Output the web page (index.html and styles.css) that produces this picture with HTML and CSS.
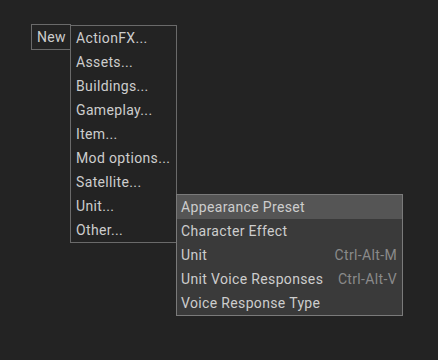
FILE: index.html
```html
<!DOCTYPE html>
<html>
<head>
<meta charset="utf-8">
<link rel="stylesheet" href="styles.css">
</head>
<body>
<div class="bar">
  <div class="new">New
    <div class="menu">
      <div class="item">ActionFX...</div>
      <div class="item">Assets...</div>
      <div class="item">Buildings...</div>
      <div class="item">Gameplay...</div>
      <div class="item">Item...</div>
      <div class="item">Mod options...</div>
      <div class="item">Satellite...</div>
      <div class="item unit">Unit...
        <div class="submenu">
          <div class="sitem active"><span>Appearance Preset</span></div>
          <div class="sitem"><span>Character Effect</span></div>
          <div class="sitem"><span>Unit</span><span class="key">Ctrl-Alt-M</span></div>
          <div class="sitem"><span>Unit Voice Responses</span><span class="key">Ctrl-Alt-V</span></div>
          <div class="sitem"><span>Voice Response Type</span></div>
        </div>
      </div>
      <div class="item">Other...</div>
    </div>
  </div>
</div>
</body>
</html>
```
FILE: styles.css
```css
html, body {
  margin: 0;
  padding: 0;
  background: #232323;
  width: 438px;
  height: 360px;
  overflow: hidden;
}
body {
  font-family: Roboto, "Liberation Sans", sans-serif;
  font-size: 14px;
  letter-spacing: 0.35px;
  color: #cdcdcd;
}
.bar {
  padding: 24px 0 0 31px;
}
.new {
  position: relative;
  height: 24px;
  line-height: 25px;
  border: 1px solid #6a6a6a;
  padding-left: 5px;
  width: 33px;
}
.menu {
  position: absolute;
  left: 38px;
  top: 0;
  width: 105px;
  border: 1px solid #6a6a6a;
  background: #232323;
}
.item {
  position: relative;
  height: 24px;
  line-height: 25px;
  padding-left: 5px;
}
.submenu {
  position: absolute;
  left: 105px;
  top: 0;
  width: 225px;
  border: 1px solid #7a7a7a;
  background: #3a3a3a;
}
.sitem {
  display: flex;
  justify-content: space-between;
  height: 24px;
  line-height: 25px;
  padding: 0 5px 0 4px;
}
.sitem.active {
  background: #555555;
}
.key {
  color: #8a8a8a;
}
```
